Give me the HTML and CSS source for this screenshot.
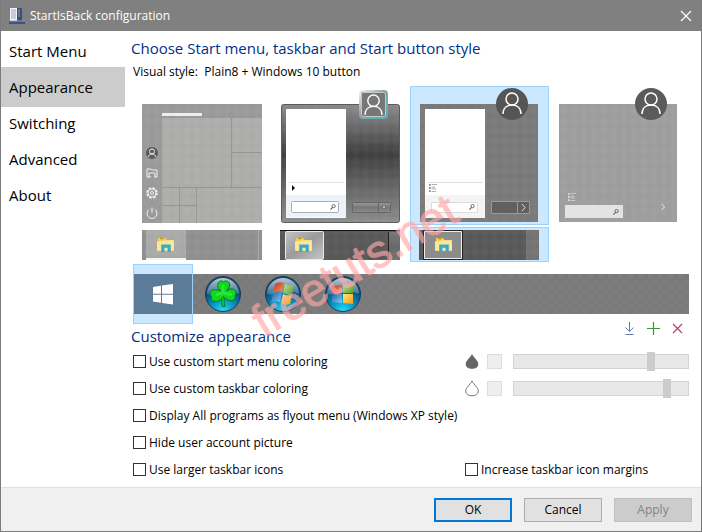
FILE: index.html
```html
<!DOCTYPE html>
<html lang="en">
<head>
<meta charset="utf-8">
<title>StartIsBack configuration</title>
<link rel="stylesheet" href="styles.css">
</head>
<body>
<svg class="defs" width="0" height="0" aria-hidden="true">
  <defs>
    <pattern id="checker" width="10" height="10" patternUnits="userSpaceOnUse">
      <path d="M5 0l5 5-5 5-5-5z" fill="#fff" opacity=".03"/>
    </pattern>
    <linearGradient id="aero" x1="0" y1="0" x2="0" y2="1">
      <stop offset="0" stop-color="#8b8b8b"/><stop offset=".15" stop-color="#707070"/><stop offset=".42" stop-color="#3f3f3f"/><stop offset=".75" stop-color="#6c6c6c"/><stop offset="1" stop-color="#8c8c8c"/>
    </linearGradient>
    <linearGradient id="glass" x1="0" y1="0" x2="1" y2="1">
      <stop offset="0" stop-color="#c4c4c4"/><stop offset=".5" stop-color="#9a9a9a"/><stop offset="1" stop-color="#c8c8c8"/>
    </linearGradient>
    <linearGradient id="pill" x1="0" y1="0" x2="0" y2="1">
      <stop offset="0" stop-color="#9a9a9a"/><stop offset=".5" stop-color="#777"/><stop offset="1" stop-color="#8c8c8c"/>
    </linearGradient>
    <linearGradient id="teal" x1="0" y1="0" x2="1" y2="1">
      <stop offset="0" stop-color="#eee"/><stop offset=".45" stop-color="#8fa3a8"/><stop offset="1" stop-color="#4fb0c4"/>
    </linearGradient>
    <radialGradient id="orb" cx=".5" cy="1" r=".95">
      <stop offset="0" stop-color="#26e0f8"/><stop offset=".35" stop-color="#0998c8"/><stop offset=".7" stop-color="#0a517f"/><stop offset="1" stop-color="#174569"/>
    </radialGradient>
    <linearGradient id="shine" x1="0" y1="0" x2="0" y2="1">
      <stop offset="0" stop-color="#fff" stop-opacity=".7"/><stop offset="1" stop-color="#fff" stop-opacity=".18"/>
    </linearGradient>
    <linearGradient id="red" x1="0" y1="0" x2="1" y2="1"><stop offset="0" stop-color="#c22f13"/><stop offset="1" stop-color="#f59a68"/></linearGradient>
    <linearGradient id="green" x1="0" y1="0" x2="1" y2="1"><stop offset="0" stop-color="#c4e394"/><stop offset="1" stop-color="#559e28"/></linearGradient>
    <linearGradient id="blue" x1="0" y1="0" x2="1" y2="1"><stop offset="0" stop-color="#1766b0"/><stop offset="1" stop-color="#8acbee"/></linearGradient>
    <linearGradient id="yellow" x1="0" y1="0" x2="1" y2="1"><stop offset="0" stop-color="#ffe878"/><stop offset="1" stop-color="#f59a16"/></linearGradient>
    <symbol id="folder" viewBox="0 0 17 15">
      <path d="M1 1h7l1 2h7v10H1z" fill="#f3ce58"/><path d="M3 1h3v1H3z" fill="#b88914"/><path d="M0 4h5l2-1h9v10H0z" fill="#ffe695"/>
      <path d="M4 7h9v7h-3v-4H7v4H4z" fill="#35abd3"/>
    </symbol>
    <symbol id="person" viewBox="0 0 20 22">
      <circle cx="10" cy="7" r="6" fill="none" stroke="#fff" stroke-width="1.5"/><path d="M1 22c0-6 4-9 9-9s9 3 9 9" fill="none" stroke="#fff" stroke-width="1.5"/>
    </symbol>
    <symbol id="lens" viewBox="0 0 7 7">
      <circle cx="4.200" cy="2.500" r="1.900" fill="none" stroke="#555"/><path d="M3 4L.5 6.500" stroke="#555" stroke-width="1.200"/>
    </symbol>
    <symbol id="list" viewBox="0 0 9 9">
      <path d="M0 1h2M0 4.500h2M0 8h2" stroke="currentColor" stroke-width="2"/><path d="M3 .5h6M3 3.500h4M3 5.500h5M3 8.500h5" stroke="currentColor" stroke-width=".8"/>
    </symbol>
    <symbol id="ball" viewBox="0 0 36 36">
      <circle cx="18" cy="18" r="17.500" fill="url(#orb)" stroke="#173c59"/>
      <path d="M2 18a16 16 0 0 1 32 0q-8-4-16-1t-16 1z" fill="url(#shine)"/>
    </symbol>
  </defs>
</svg>

<div class="window">
  <header class="titlebar">
    <svg width="16" height="17" viewBox="0 0 16 17" aria-hidden="true">
      <rect x="1" y="1" width="7" height="13" fill="#f2f4f8"/><path d="M2 3h5M2 5h5M2 7h5M2 9h5M2 11h5" stroke="#9aa6ba"/>
      <rect x="8" y="1" width="5" height="13" fill="#3c4f78"/><path d="M9 3h2M9 5h2M9 7h2M9 9h2" stroke="#8998b8"/>
      <rect y="14" width="16" height="3" fill="#41527e"/><path d="M0 14h16" stroke="#8fa0c4"/>
    </svg>
    <h1>StartIsBack configuration</h1>
    <button class="close" aria-label="Close">
      <svg width="12" height="12" viewBox="0 0 12 12"><path d="M1 1l10 10M11 1L1 11" stroke="#fff" stroke-width="1.200"/></svg>
    </button>
  </header>

  <div class="body">
    <nav class="nav">
      <a href="#start">Start Menu</a>
      <a href="#appearance" class="current" aria-current="page">Appearance</a>
      <a href="#switching">Switching</a>
      <a href="#advanced">Advanced</a>
      <a href="#about">About</a>
    </nav>

    <main class="content">
      <h2>Choose Start menu, taskbar and Start button style</h2>
      <p class="style-name">Visual style:&nbsp; Plain8 + Windows 10 button</p>

      <div class="gallery">
        <button class="tile" aria-label="Windows 10 menu">
          <svg width="139" height="139" viewBox="0 0 139 139">
            <path d="M10 18h120v119H10z" fill="#999"/><path d="M30 32h100v105H30z" fill="#acacaa"/>
            <path d="M10 18h120v119H10z" fill="url(#checker)"/><path d="M30 27h40v3H30z" fill="#eee"/>
            <path d="M99.500 32v69M99 66.500h31M30 101.500h100M47.500 102v35M64.500 102v35M30 119.500h35" stroke="#969696"/>
            <circle cx="20" cy="67" r="6" fill="#5b5b5b"/><g fill="none" stroke="#eee"><circle cx="20" cy="65.500" r="2.500"/><path d="M16.500 71c0-4 7-4 7 0M15 91V83h4l1 1h5v7h-2v-4h-6v4zM17 91h2m3 0h1"/>
            <circle cx="20" cy="107" r="5" stroke-dasharray="2.600 1.300" stroke-width="1.500"/><circle cx="20" cy="107" r="4"/><circle cx="20" cy="107" r="1.500"/><path d="M17 123.500a5 5 0 1 0 6 0M20 121.500v5.500"/></g>
          </svg>
        </button>
        <button class="tile" aria-label="Windows 7 menu">
          <svg width="139" height="139" viewBox="0 0 139 139">
            <rect x="10.500" y="18.500" width="118" height="118" rx="2" fill="url(#aero)" stroke="#5d5d5d"/><path d="M11 19h117v117H11z" fill="url(#checker)"/>
            <rect x="15" y="23" width="60" height="109" rx="1" fill="#fff"/><path d="M15 109h60v22H15z" fill="#edf1f9"/><path d="M18 96.500h55" stroke="#dbe3ea"/>
            <path d="M21 99l3 3-3 3z" fill="#111"/><rect x="20.500" y="115.500" width="47" height="11" rx="1" fill="#fff" stroke="#a9adb4"/><use href="#lens" x="59" y="118" width="6" height="6"/>
            <rect x="81.500" y="116.500" width="38" height="10" rx="1" fill="url(#pill)" stroke="#666"/><path d="M107.500 117v9" stroke="#666"/><circle cx="113" cy="121" r="1.500" fill="#ccc" stroke="#444" stroke-width=".5"/>
            <rect x="89" y="5" width="27" height="27" rx="3" fill="#777" stroke="url(#teal)" stroke-width="2"/><rect x="90.500" y="6.500" width="24" height="24" rx="2" fill="none" stroke="#e9e9e9" opacity=".7"/><use href="#person" x="93" y="8" width="19" height="21"/>
          </svg>
        </button>
        <button class="tile selected" aria-label="Plain8 menu">
          <svg width="139" height="139" viewBox="0 0 139 139">
            <path d="M10 18h118v118H10z" fill="#797979"/><path d="M10 18h118v118H10z" fill="url(#checker)"/><path d="M15 23h60v109H15z" fill="#fff"/><path d="M15 109h60v23H15z" fill="#f4f4f4"/>
            <path d="M18 96.500h54" stroke="#ddd"/><use class="list-dark" href="#list" x="19" y="98" width="8" height="8"/><path d="M21.500 116.500h46v10h-46z" fill="#fff" stroke="#ddd"/><use href="#lens" x="59" y="118" width="6" height="6"/>
            <path d="M81.500 115.500h38v12h-38zM107.500 116v11" fill="#606060" stroke="#999"/><path d="M112 118l3 3.500-3 3.500" fill="none" stroke="#ddd"/>
            <circle cx="102" cy="18" r="16" fill="#555"/><use href="#person" x="92" y="6" width="20" height="22"/>
          </svg>
        </button>
        <button class="tile" aria-label="Plain10 menu">
          <svg width="139" height="139" viewBox="0 0 139 139">
            <path d="M10 18h118v118H10z" fill="#9d9d9d"/><path d="M10 18h118v118H10z" fill="url(#checker)"/>
            <use class="list-light" href="#list" x="19" y="107" width="8" height="8"/><path d="M16 119h58v13H16z" fill="#e3e3e3"/><use href="#lens" x="64" y="123" width="6" height="6"/>
            <path d="M112.500 118l3 3-3 3" fill="none" stroke="#eee"/><circle cx="102" cy="18" r="16" fill="#5b5b5b"/><use href="#person" x="92" y="6" width="20" height="22"/>
          </svg>
        </button>

        <button class="tile" aria-label="Windows 10 taskbar">
          <svg width="139" height="35" viewBox="0 0 139 35">
            <path d="M10 3h120v30H10z" fill="#8f8f8f"/><path d="M14 3h40v30H14z" fill="#a9a9a7"/><path d="M10 3h120v30H10z" fill="url(#checker)"/><path d="M14 31h40v2H14z" fill="#f4f4f4"/><path d="M126.500 3v30" stroke="#aaa"/><use href="#folder" x="25" y="10" width="18" height="16"/>
          </svg>
        </button>
        <button class="tile" aria-label="Windows 7 taskbar">
          <svg width="139" height="35" viewBox="0 0 139 35">
            <path d="M9 3h120v30H9z" fill="#585858"/><path d="M9 3h120v30H9z" fill="url(#checker)"/><path d="M9 3.500h120" stroke="#111"/><rect x="14.500" y="4.500" width="38" height="28" rx="1" fill="url(#glass)" stroke="#e8e8e8"/><path d="M117 5h12v28h-12z" fill="url(#pill)" opacity=".5"/><path d="M117.500 5v28" stroke="#222"/><use href="#folder" x="24" y="10" width="18" height="16"/>
          </svg>
        </button>
        <button class="tile selected" aria-label="Plain8 taskbar">
          <svg width="139" height="35" viewBox="0 0 139 35">
            <path d="M9 3h120v30H9z" fill="#585858"/><path d="M116 3h13v30h-13z" fill="#737373"/><path d="M9 3h120v30H9z" fill="url(#checker)"/><path d="M13.500 3.500h39v29h-39z" fill="none" stroke="#222"/><path d="M14.500 4.500h37v27h-37z" fill="#8c8c8c" stroke="#eee"/><use href="#folder" x="25" y="10" width="18" height="16"/>
          </svg>
        </button>
      </div>

      <div class="start-buttons">
        <button class="start selected" aria-label="Windows 10 button">
          <svg width="60" height="60" viewBox="0 0 60 60"><path d="M20 23l8-1.200v8H20zM29 21.600l11-1.600v9.800H29zM20 30.800h8v8L20 37.600zM29 30.800h11v9.800l-11-1.600z" fill="#fff"/></svg>
        </button>
        <button class="start" aria-label="Clover button">
          <svg width="60" height="60" viewBox="0 0 60 60"><use href="#ball" x="12" y="12" width="36" height="36"/>
            <g fill="#10d820" stroke="#047c20"><path d="M28.500 31c0 5 0 8 1 11.500h2.500c-1-4-1-7-1-11.500z"/>
            <path d="M28 27c-3-2-4-5-3-8 1-2 4-3 5.500-1 2-2 5.500-1 6 2 .5 3-1.500 5-3 7 3-2 6-3 8-1 2 1.500 2 4 .5 5.500 1 3-2 6-5 5-3-.5-5-2-6.500-4-2 3-4 4.500-7 5-4 .5-6-2-5-5-2-2-2-5.500 1-6.500 3-.5 6-.5 8.500 1z"/></g>
            <path d="M30 29l-6 1.500M30 28v-6M31 29l7 1.500" stroke="#4cf04e" stroke-width="3" stroke-linecap="round" opacity=".5"/></svg>
        </button>
        <button class="start" aria-label="Windows 7 orb">
          <svg width="60" height="60" viewBox="0 0 60 60"><use href="#ball" x="12" y="12" width="36" height="36"/>
            <path d="M22 20q4-3 9-1l-2 9q-4-2-9 1z" fill="url(#red)"/><path d="M32 20q5 3 9 0l-2 10q-4 2-9-1z" fill="url(#green)"/><path d="M20 30q5-3 9-1l-2 9q-5-2-9 1z" fill="url(#blue)"/><path d="M30 30q4 3 9 1l-2 9q-5 2-9-1z" fill="url(#yellow)"/></svg>
        </button>
        <button class="start" aria-label="Windows 8 orb">
          <svg width="60" height="60" viewBox="0 0 60 60"><use href="#ball" x="12" y="12" width="36" height="36"/>
            <path d="M19 22l10-1v8H19z" fill="url(#red)"/><path d="M30 21l10-1v9H30z" fill="url(#green)"/><path d="M19 30h10v9l-10-1z" fill="url(#blue)"/><path d="M30 30h10v10l-10-1z" fill="url(#yellow)"/></svg>
        </button>
      </div>

      <div class="section-head">
        <h2>Customize appearance</h2>
        <div class="tools">
          <button aria-label="Download"><svg width="16" height="16" viewBox="0 0 16 16"><path d="M8.500 2v9M4.500 7.500l4 4 4-4M4.500 14.500h8" fill="none" stroke="#627b9e"/></svg></button>
          <button aria-label="Add"><svg width="16" height="16" viewBox="0 0 16 16"><path d="M8.500 2v13M2 8.500h13" stroke="#2e9a30" stroke-width="1.200"/></svg></button>
          <button aria-label="Remove"><svg width="16" height="16" viewBox="0 0 16 16"><path d="M4 4l9 9M13 4l-9 9" stroke="#b8405c" stroke-width="1.200"/></svg></button>
        </div>
      </div>

      <div class="options">
        <label class="check"><input type="checkbox">Use custom start menu coloring</label>
        <div class="color">
          <svg width="14" height="17" viewBox="0 0 14 17" aria-hidden="true"><path d="M7 1C5 5 .7 7.500.7 11.200c0 6.200 12.600 6.200 12.600 0C13.300 7.500 9 5 7 1z" fill="#666"/></svg>
          <button class="swatch" aria-label="Start menu color" disabled></button>
          <input type="range" aria-label="Start menu opacity" value="80">
        </div>
        <label class="check"><input type="checkbox">Use custom taskbar coloring</label>
        <div class="color">
          <svg width="14" height="17" viewBox="0 0 14 17" aria-hidden="true"><path d="M7 1C5 5 .7 7.500.7 11.200c0 6.200 12.600 6.200 12.600 0C13.300 7.500 9 5 7 1z" fill="#fff" stroke="#777"/></svg>
          <button class="swatch" aria-label="Taskbar color" disabled></button>
          <input type="range" aria-label="Taskbar opacity" value="90">
        </div>
        <label class="check wide"><input type="checkbox">Display All programs as flyout menu (Windows XP style)</label>
        <label class="check wide"><input type="checkbox">Hide user account picture</label>
        <label class="check"><input type="checkbox">Use larger taskbar icons</label>
        <label class="check"><input type="checkbox">Increase taskbar icon margins</label>
      </div>
      <span class="watermark">freetuts.net</span>
    </main>
  </div>

  <footer class="actions">
    <button class="primary">OK</button>
    <button>Cancel</button>
    <button disabled>Apply</button>
  </footer>
</div>
</body>
</html>
```
FILE: styles.css
```css
* { box-sizing: border-box; }
body { margin: 0; background: #fff; color: #000; font: 12px/16px "Open Sans", "Noto Sans", sans-serif; }
button { margin: 0; padding: 0; border: 0; background: none; font: inherit; color: inherit; }
svg { display: block; flex: none; }
h1, h2, p { margin: 0; font-weight: 400; }
.defs { position: absolute; }

.window { display: flex; flex-direction: column; min-height: 100vh; border: 1px solid #7b7b7b; border-top: 0; }
.titlebar { display: flex; align-items: center; height: 31px; padding-left: 8px; gap: 5px; background: #808080; color: #fff; }
.titlebar h1 { flex: 1; font-size: 12px; }
.close { display: grid; place-items: center; width: 31px; height: 31px; }

.body { display: flex; flex: 1; }
.nav { display: flex; flex-direction: column; flex: none; width: 124px; }
.nav a { padding: 0 8px; font-size: 15px; line-height: 40px; color: #000; text-decoration: none; }
.nav a + a { margin-top: -4px; }
.nav .current { background: #ccc; }

.content { position: relative; flex: 1; min-width: 0; padding: 5px 12px 4px 8px; }
h2 { margin-left: -2px; font-size: 15px; line-height: 24px; color: #003087; }
.style-name { margin: 4px 0 6px; }

.gallery { display: grid; grid-template-columns: repeat(4, 1fr); gap: 2px 0; margin: 0 1px 2px -1px; }
.tile { display: grid; justify-content: center; }
.selected { background: #cce8ff; box-shadow: inset 0 0 0 1px #99d1ff; }
.list-dark { color: #888; }
.list-light { color: #ddd; }

.start-buttons { display: flex; height: 60px; background: linear-gradient(transparent 10px, #797979 10px 50px, transparent 50px); position: relative; }
.start-buttons::before { content: ""; position: absolute; inset: 10px 0; background: repeating-conic-gradient(#ffffff08 0 25%, transparent 0 50%) 0 0 / 10px 10px; }
.start { position: relative; width: 60px; }
.start.selected { background: linear-gradient(#cce8ff 10px, #5b7c99 10px 50px, #cce8ff 50px); }

.section-head { display: flex; align-items: flex-start; justify-content: space-between; }
.tools { display: flex; gap: 8px; margin-top: -4px; padding-right: 4px; }

.options { display: grid; grid-template-columns: 332fr 224fr; grid-auto-rows: 27px; align-items: center; }
.check { display: flex; align-items: center; gap: 3px; }
.wide { grid-column: 1 / -1; }
.check input { appearance: none; width: 13px; height: 13px; margin: 0; border: 1px solid #333; background: #fff; }
.check input:checked { background: #333; }
.color { display: flex; align-items: center; }
.swatch { width: 15px; height: 15px; margin: 0 11px 0 8px; border: 1px solid #ddd; background: #eee; }
.color input { appearance: none; flex: 1; min-width: 0; height: 19px; margin: 0; background: none; }
.color input::-webkit-slider-runnable-track { height: 15px; border: 1px solid #d3d3d3; background: #e7e8ea; }
.color input::-webkit-slider-thumb { appearance: none; width: 8px; height: 19px; margin-top: -3px; background: #ccc; }

.actions { display: flex; justify-content: flex-end; align-items: center; gap: 12px; height: 44px; padding: 0 9px; border-top: 1px solid #dfdfdf; background: #f0f0f0; }
.actions button { width: 78px; height: 24px; border: 1px solid #adadad; background: #e1e1e1; }
.actions .primary { border: 2px solid #0078d7; }
.actions button:disabled { border-color: #bfbfbf; background: #ccc; color: #838383; }

.watermark { position: absolute; left: 143px; top: 266px; font: 46px/48px "Liberation Sans", sans-serif; color: #ffa7a7; -webkit-text-stroke: 1px #ffa7a7; opacity: .65; transform: rotate(-31deg); transform-origin: left bottom; pointer-events: none; }
```
